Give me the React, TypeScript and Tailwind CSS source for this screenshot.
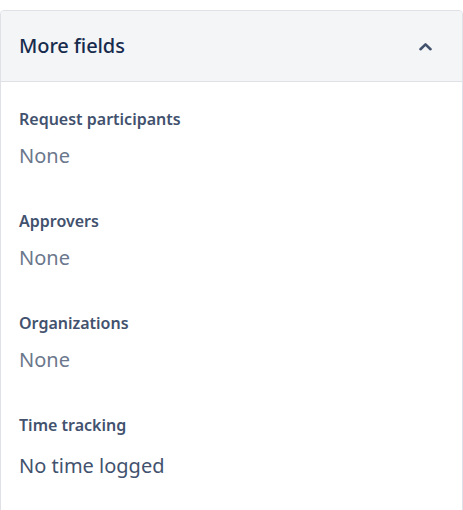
import React from 'react';

const fields = [
  { label: 'Request participants', value: 'None', empty: true },
  { label: 'Approvers', value: 'None', empty: true },
  { label: 'Organizations', value: 'None', empty: true },
  { label: 'Time tracking', value: 'No time logged', empty: false },
];

export default function App() {
  return (
    <div className="bg-white w-[463px] h-[510px] pt-[10px] overflow-hidden" style={{ fontFamily: '"Noto Sans", "Open Sans", sans-serif' }}>
      <div className="w-[463px] border border-[#dfe1e6] rounded-t-[4px] h-[520px]">
        <button className="w-full flex items-center justify-between h-[71px] px-[18px] bg-[#f4f5f7] border-b border-[#dfe1e6] rounded-t-[4px]">
          <span className="text-[20px] font-medium text-[#172b4d] tracking-[-0.1px]">More fields</span>
          <svg className="w-[13px] h-[9px] mr-[12px] text-[#42526e]" viewBox="0 0 13 9" fill="none">
            <path d="M1.5 7.2L6.5 2.4l5 4.8" stroke="currentColor" strokeWidth={2.6} strokeLinecap="round" strokeLinejoin="round" />
          </svg>
        </button>
        <div className="px-[18px] pt-[26px]">
          {fields.map((f) => (
            <div key={f.label} className="h-[102px]">
              <p className="text-[16px] font-semibold text-[#42526e] leading-[22px]">{f.label}</p>
              <p className={`text-[20px] leading-[28px] ${f.empty ? 'mt-[12px] text-[#6b778c]' : 'mt-[16px] text-[#42526e]'}`}>{f.value}</p>
            </div>
          ))}
        </div>
      </div>
    </div>
  );
}
